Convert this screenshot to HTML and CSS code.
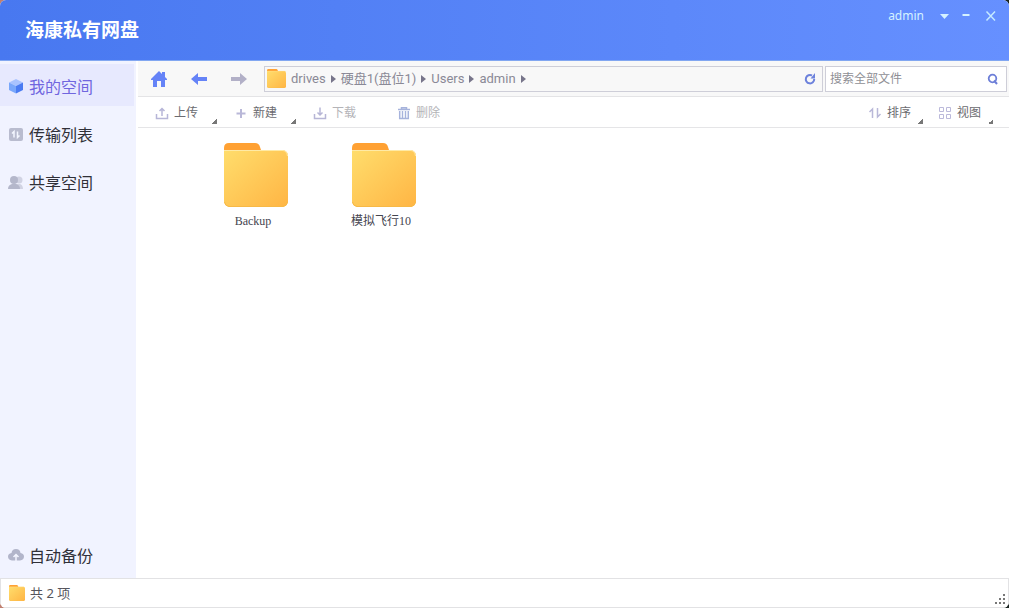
FILE: index.html
```html
<!DOCTYPE html>
<html lang="zh-CN">
<head>
<meta charset="utf-8">
<title>海康私有网盘</title>
<link rel="stylesheet" href="styles.css">
</head>
<body>
<svg class="defs" aria-hidden="true">
  <defs>
    <linearGradient id="front" x1="0" y1="0" x2="1" y2="1"><stop offset="0" stop-color="#ffdd6c"/><stop offset="1" stop-color="#ffb544"/></linearGradient>
    <symbol id="folder" viewBox="0 0 64 64">
      <path d="M0 20V5Q0 0 5 0H31Q35 0 36 4L38 10V20Z" fill="#ffa133"/>
      <path d="M0 7H59Q64 8 64 13V59Q63 63 59 64H5Q1 63 0 59Z" fill="url(#front)"/>
      <path d="M0 7.500H59Q63 8 63.500 13" fill="none" stroke="#ffeaa5"/>
      <path d="M0.500 59Q1 63 5 63.500H59Q63 63 63.500 59" fill="none" stroke="#f7b947"/>
    </symbol>
  </defs>
</svg>
<div class="window">
  <header class="titlebar">
    <h1 class="brand">海康私有网盘</h1>
    <div class="window-tools">
      <button class="account" type="button">admin
        <svg width="9" height="5" viewBox="0 0 9 5" aria-hidden="true"><path d="M0 0H9L4.500 5Z" fill="#d5f2ff"/></svg>
      </button>
      <button class="window-button" type="button" aria-label="最小化"><svg width="12" height="12" viewBox="0 0 12 12"><path d="M2.500 5H9.500" stroke="#d5f2ff" stroke-width="2"/></svg></button>
      <button class="window-button" type="button" aria-label="关闭"><svg width="12" height="12" viewBox="0 0 12 12"><path d="M1.500 1.500L10 10.500M10 1.500L1.500 10.500" stroke="#c5eaff" stroke-width="1.500"/></svg></button>
    </div>
  </header>

  <div class="body">
    <nav class="sidebar">
      <a class="nav-item active" href="#space">
        <svg width="16" height="16" viewBox="0 0 16 16" aria-hidden="true"><path d="M8 1L15 4.500L8 8L1 4.500Z" fill="#a9c3ff"/><path d="M1 4.500L8 8V15.500L1 12Z" fill="#79a7fb"/><path d="M15 4.500L8 8V15.500L15 12Z" fill="#4a7bf2"/></svg>
        我的空间</a>
      <a class="nav-item" href="#transfer">
        <svg width="16" height="16" viewBox="0 0 16 16" aria-hidden="true"><rect x="1" y="2" width="14" height="13" rx="2" fill="#b9bccf"/><path d="M6 11.500V5.500L4 7.500M9.500 5.500V11.500L11.500 9.500" fill="none" stroke="#f3f6ff" stroke-width="1.500"/></svg>
        传输列表</a>
      <a class="nav-item" href="#shared">
        <svg width="16" height="16" viewBox="0 0 16 16" aria-hidden="true"><g fill="#d1d3e3"><circle cx="11" cy="6" r="3.500"/><path d="M8 15V10H12Q15 11 15 15Z"/></g><g fill="#b4b7cb"><circle cx="6" cy="6" r="4"/><path d="M0 15Q0 11 4 10H8Q12 11 12 15Z"/></g></svg>
        共享空间</a>
      <a class="nav-item backup" href="#backup">
        <svg width="16" height="16" viewBox="0 0 16 16" aria-hidden="true"><path d="M4 13.500Q0 13 0 9.500Q0 6.500 3.500 6Q4 2 8 2T12.500 6Q16 6.500 16 9.500Q16 13 12 13.500Z" fill="#b2b5ca"/><path d="M8 14V8M5.500 10L8 7.500L10.500 10" fill="none" stroke="#f3f5ff" stroke-width="1.500"/></svg>
        自动备份</a>
    </nav>

    <main class="content">
      <div class="location">
        <div class="history">
          <button type="button" aria-label="主页"><svg width="18" height="18" viewBox="0 0 18 18"><path d="M9 1L12 4V2H15V7L17 9V10H15V17H11V11H7V17H3V10H1V9Z" fill="#6583f7"/></svg></button>
          <button type="button" aria-label="后退"><svg width="18" height="18" viewBox="0 0 18 18"><path d="M1 9L8 3V7H17V11H8V15Z" fill="#6583f7"/></svg></button>
          <button type="button" aria-label="前进"><svg width="18" height="18" viewBox="0 0 18 18"><path d="M17 9L10 3V7H1V11H10V15Z" fill="#b2b0c7"/></svg></button>
        </div>
        <div class="address">
          <svg class="address-folder" width="19" height="19" aria-hidden="true"><use href="#folder"/></svg>
          <div class="crumbs">
            <a href="#drives">drives</a><i></i>
            <a href="#disk">硬盘1(盘位1)</a><i></i>
            <a href="#users">Users</a><i></i>
            <a href="#admin">admin</a><i></i>
          </div>
          <button type="button" aria-label="刷新"><svg width="12" height="12" viewBox="0 0 12 12"><path d="M10.200 6A4.200 4.200 0 1 1 8 2.500" fill="none" stroke="#6d82dc" stroke-width="2"/><path d="M6.500 5.500H11V0Z" fill="#6d82dc"/></svg></button>
        </div>
        <form class="search">
          <input type="text" placeholder="搜索全部文件" aria-label="搜索全部文件">
          <button type="button" aria-label="搜索"><svg width="12" height="12" viewBox="0 0 12 12"><circle cx="5.500" cy="5.500" r="3.800" fill="none" stroke="#6d7fd8" stroke-width="1.800"/><path d="M7 7.500L10 11" stroke="#6d7fd8" stroke-width="2"/></svg></button>
        </form>
      </div>

      <div class="toolbar">
        <div class="tools">
          <button class="tool" type="button"><svg width="14" height="14" viewBox="0 0 14 14"><path d="M1.500 8V12.500H12.500V8M7 10V3M4.500 5L7 2.500L9.500 5" fill="none" stroke="#b7b6d8" stroke-width="1.500"/></svg>上传<i class="corner"></i></button>
          <button class="tool" type="button"><svg width="14" height="14" viewBox="0 0 14 14"><path d="M7 3V12M2.500 7.500H11.500" stroke="#b9b8d8" stroke-width="2"/></svg>新建<i class="corner"></i></button>
          <button class="tool" type="button" disabled><svg width="14" height="14" viewBox="0 0 14 14"><path d="M1.500 8V12.500H12.500V8M7 1.500V9M4.500 6.500L7 9L9.500 6.500" fill="none" stroke="#b7b6d6" stroke-width="1.500"/></svg>下载</button>
        </div>
        <button class="tool" type="button" disabled><svg width="14" height="14" viewBox="0 0 14 14"><path d="M1 3.500H13M4.500 3V1.800H9.500V3" fill="none" stroke="#a6b3dc" stroke-width="1.500"/><path d="M2.700 5V12.500H11.300V5" fill="none" stroke="#a6b3dc" stroke-width="1.500"/><path d="M5.500 5V12M8.500 5V12" stroke="#a6b3dc" stroke-width="1.400"/></svg>删除</button>
        <div class="view-tools">
          <button class="tool" type="button"><svg width="14" height="14" viewBox="0 0 14 14"><path d="M4.500 12V3L1.500 6M9.500 2V11L12.500 8" fill="none" stroke="#b9b8d8" stroke-width="1.500"/></svg>排序<i class="corner"></i></button>
          <button class="tool" type="button"><svg width="14" height="14" viewBox="0 0 14 14"><path d="M1.500 1.500H5.500V5.500H1.500ZM8.500 1.500H12.500V5.500H8.500ZM1.500 8.500H5.500V12.500H1.500ZM8.500 8.500H12.500V12.500H8.500Z" fill="none" stroke="#bbb9da"/></svg>视图<i class="corner"></i></button>
        </div>
      </div>

      <div class="files">
        <a class="file" href="#Backup"><svg width="64" height="64" aria-hidden="true"><use href="#folder"/></svg><span>Backup</span></a>
        <a class="file" href="#flight"><svg width="64" height="64" aria-hidden="true"><use href="#folder"/></svg><span>模拟飞行10</span></a>
      </div>
    </main>
  </div>

  <footer class="status">
    <svg width="16" height="16" aria-hidden="true"><use href="#folder"/></svg>
    <span>共 2 项</span>
    <svg class="grip" width="11" height="11" viewBox="0 0 11 11" aria-hidden="true"><path d="M8 0h2v2h-2zM4 4h2v2h-2zM8 4h2v2h-2zM0 8h2v2h-2zM4 8h2v2h-2zM8 8h2v2h-2z" fill="#777"/></svg>
  </footer>
</div>
</body>
</html>
```
FILE: styles.css
```css
* { box-sizing: border-box; }

body {
  margin: 0;
  background: linear-gradient(90deg, #c08070 50%, #18231f 50%);
  font: 12px/18px Roboto, "Noto Sans CJK SC", sans-serif;
  color: #6b6b70;
}

a { color: inherit; text-decoration: none; }

button {
  display: flex;
  align-items: center;
  padding: 0;
  border: 0;
  background: none;
  color: inherit;
  font: inherit;
}

svg { flex: none; display: block; }

.defs { position: absolute; width: 0; height: 0; }

.window {
  display: flex;
  flex-direction: column;
  min-height: 100vh;
  overflow: hidden;
  border-radius: 6px;
  background: #fff;
}

.titlebar {
  display: flex;
  justify-content: space-between;
  height: 61px;
  padding: 0 12px 0 25px;
  border-bottom: 1px solid #82a7f1;
  background: linear-gradient(90deg, #4878f0, #6690ff);
}

.brand {
  margin: 0;
  color: #fff;
  font: bold 19px/58px "Noto Sans CJK SC", sans-serif;
}

.window-tools {
  display: flex;
  align-items: center;
  gap: 13px;
  height: 32px;
}

.account {
  gap: 16px;
  color: #d5f2ff;
  font: 12px/18px "Noto Sans", sans-serif;
}

.window-tools .account { margin-right: -2px; }

.body { display: flex; flex: 1; }

.sidebar {
  display: flex;
  flex-direction: column;
  gap: 6px;
  width: 136px;
  padding: 3px 2px 2px 0;
  background: #f1f3ff;
}

.nav-item {
  display: flex;
  align-items: center;
  gap: 5px;
  height: 42px;
  padding: 2px 0 0 8px;
  color: #303038;
  font: 16px/24px "Noto Sans CJK SC", sans-serif;
}

.nav-item.active { background: #e7e9fe; color: #7066df; }

.nav-item.backup { margin-top: auto; padding-top: 0; }

.content {
  display: flex;
  flex: 1;
  flex-direction: column;
  min-width: 0;
  padding-left: 2px;
}

.location {
  display: flex;
  align-items: center;
  gap: 2px;
  height: 36px;
  padding-right: 2px;
  border-bottom: 1px solid #e4e4e6;
  background: #f8f8f8;
}

.history { display: flex; gap: 22px; padding: 0 14px 0 12px; }

.address,
.search {
  display: flex;
  align-items: center;
  height: 26px;
  border: 1px solid #ceced8;
}

.address { flex: 1; padding: 0 6px 0 2px; color: #8a8996; font-size: 13px; }

.crumbs { display: flex; flex: 1; align-items: center; gap: 5px; padding-left: 5px; }

.crumbs i {
  border: solid transparent;
  border-width: 4px 0 4px 5px;
  border-left-color: #77758a;
}

.search { width: 182px; padding: 0 7px 0 4px; background: #fff; }

.search input {
  flex: 1;
  min-width: 0;
  padding: 0;
  border: 0;
  outline: 0;
  background: none;
  font: inherit;
}

.search input::placeholder { color: #8f8f95; opacity: 1; }

.toolbar {
  display: flex;
  align-items: center;
  gap: 22px;
  height: 31px;
  padding: 2px 16px 0 17px;
  border-bottom: 1px solid #e5e5e7;
}

.tools { display: flex; gap: 17px; }

.tool { gap: 5px; height: 28px; }

.tools .tool { width: 62px; }

.tool:disabled { color: #b4b4b8; }

.corner {
  align-self: flex-end;
  width: 5px;
  height: 5px;
  margin: 0 0 3px auto;
  background: linear-gradient(135deg, transparent 50%, #777 50%);
}

.view-tools { display: flex; gap: 15px; margin-left: auto; }

.view-tools .tool { width: 55px; }

.files { display: flex; flex-wrap: wrap; padding: 15px 54px; }

.file {
  display: flex;
  flex-direction: column;
  align-items: center;
  gap: 5px;
  width: 128px;
  color: #45454f;
  font: 12px/18px "Liberation Serif", "Noto Sans CJK SC", serif;
}

.file span { padding-right: 6px; }

.status {
  display: flex;
  align-items: center;
  gap: 5px;
  height: 30px;
  padding: 0 4px 0 8px;
  border: 1px solid #e2e2e4;
  color: #55555c;
  font: 13px/20px "Noto Sans", "Noto Sans CJK SC", sans-serif;
}

.status .grip { align-self: flex-end; margin: 0 -2px 2px auto; }
```
